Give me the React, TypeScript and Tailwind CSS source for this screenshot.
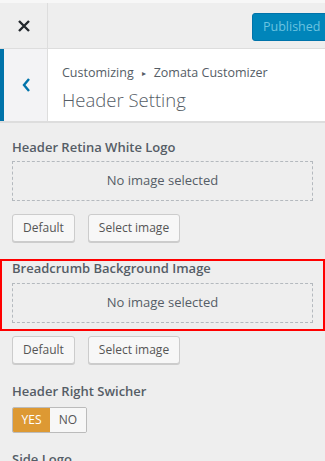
import React from "react";

function Title({ children, className = "" }: { children: React.ReactNode; className?: string }) {
  return <div className={"text-[13px] font-semibold text-[#555d66] leading-[20px] " + className}>{children}</div>;
}

function Dashed({ className = "mt-[4px]" }: { className?: string }) {
  return (
    <div className={"h-[40px] border border-dashed border-[#b4b9be] flex items-center justify-center text-[13px] text-[#555d66] " + className}>
      No image selected
    </div>
  );
}

function Buttons({ className = "" }: { className?: string }) {
  return (
    <div className={"flex gap-[13px] " + className}>
      <button className="h-[28px] px-[10px] rounded-[3px] border border-[#cccccc] bg-[#f7f7f7] shadow-[0_1px_0_#cccccc] text-[12px] text-[#555555]">
        Default
      </button>
      <button className="h-[28px] px-[10px] rounded-[3px] border border-[#cccccc] bg-[#f7f7f7] shadow-[0_1px_0_#cccccc] text-[12px] text-[#555555]">
        Select image
      </button>
    </div>
  );
}

export default function App() {
  return (
    <div
      className="w-[325px] h-[461px] overflow-hidden bg-[#eeeeee] flex flex-col"
      style={{ fontFamily: '"Open Sans", "Noto Sans", sans-serif' }}
    >
      <div className="h-[3px] bg-[#f7f7f7] shrink-0" />
      <div className="h-[46px] shrink-0 flex items-center border-b border-[#dddddd] bg-[#eeeeee]">
        <div className="w-[48px] h-full border-r border-[#dddddd] flex items-center justify-center">
          <svg width="14" height="14" viewBox="0 0 14 14">
            <path d="M2 2 L12 12 M12 2 L2 12" stroke="#23282d" strokeWidth="2.4" />
          </svg>
        </div>
        <div className="flex-1" />
        <div className="h-[28px] w-[85px] shrink-0 mt-[3px] mr-[-12px] pl-[10px] rounded-[3px] bg-[#0085ba] border border-[#0073aa] flex items-center text-[12.5px] text-[#6cc3e0]">
          Published
        </div>
      </div>
      <div className="h-[74px] shrink-0 flex border-b-2 border-[#dddddd] bg-white">
        <div className="w-[4px] bg-[#0073aa]" />
        <div className="w-[44px] bg-[#f3f3f5] border-r border-[#dddddd] flex items-center justify-center">
          <svg width="10" height="16" viewBox="0 0 10 16">
            <path d="M8 2 L3 8 L8 14" stroke="#0073aa" strokeWidth="2.4" fill="none" />
          </svg>
        </div>
        <div className="pl-[14px] pt-[15px]">
          <div className="text-[12.5px] text-[#555d66] leading-[18px] flex items-center">
            Customizing
            <span className="mx-[8px] text-[8px]">▸</span>
            Zomata Customizer
          </div>
          <div className="text-[18.5px] font-light text-[#555d66] leading-[26px] mt-[5px]">Header Setting</div>
        </div>
      </div>
      <div className="px-[12px] pt-[14px]">
        <Title>Header Retina White Logo</Title>
        <Dashed />
        <Buttons className="mt-[13px]" />
        <div className="mx-[-12px] mt-[17px] border-2 border-[#ff0000] px-[10px] pb-[6px]">
          <Title className="mt-[-3px]">Breadcrumb Background Image</Title>
          <Dashed className="mt-[5px]" />
        </div>
        <Buttons className="mt-[5px]" />
        <Title className="mt-[17px]">Header Right Swicher</Title>
        <div className="mt-[6px] flex w-[75px] h-[26px] border border-[#bbbbbb] rounded-[2px] overflow-hidden text-[12px]">
          <div className="w-[37px] bg-[#dd9933] text-white flex items-center justify-center">YES</div>
          <div className="flex-1 bg-[#f7f7f7] text-[#555555] flex items-center justify-center">NO</div>
        </div>
        <Title className="mt-[16px]">Side Logo</Title>
      </div>
    </div>
  );
}
